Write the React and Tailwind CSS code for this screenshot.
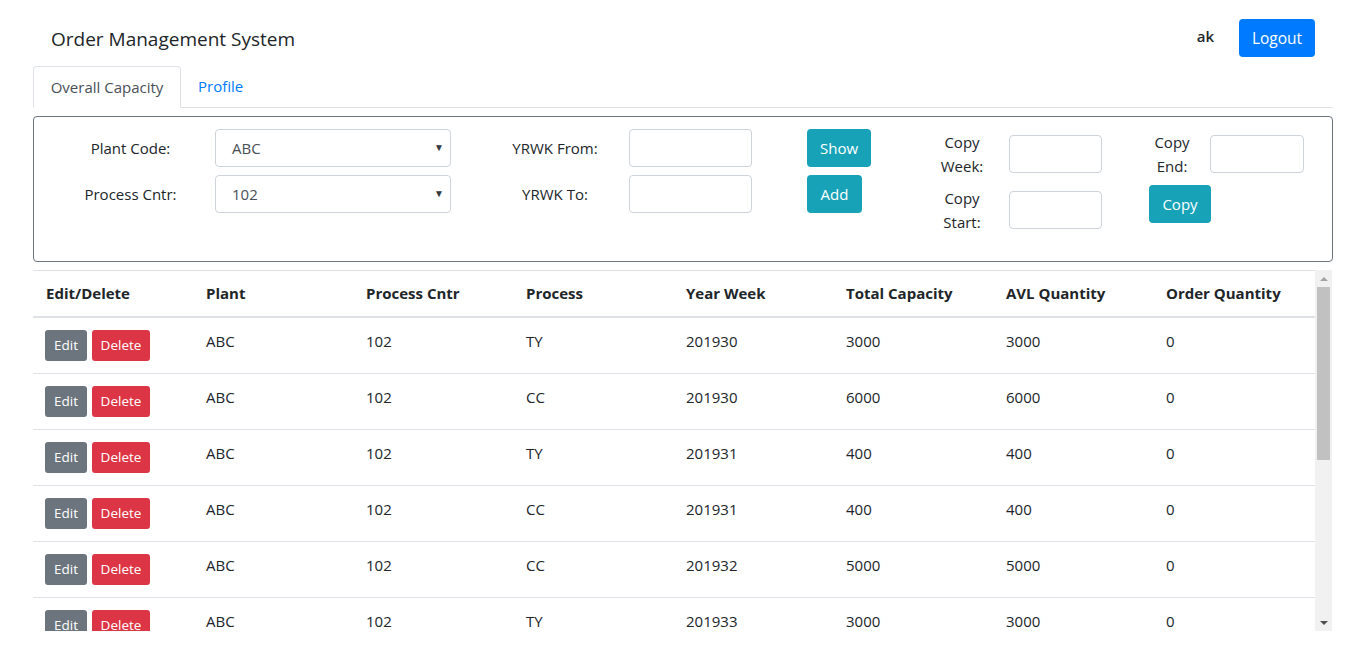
import React from "react";

const rows = [
  ["ABC", "102", "TY", "201930", "3000", "3000", "0"],
  ["ABC", "102", "CC", "201930", "6000", "6000", "0"],
  ["ABC", "102", "TY", "201931", "400", "400", "0"],
  ["ABC", "102", "CC", "201931", "400", "400", "0"],
  ["ABC", "102", "CC", "201932", "5000", "5000", "0"],
  ["ABC", "102", "TY", "201933", "3000", "3000", "0"],
  ["ABC", "102", "CC", "201933", "2000", "2000", "0"],
  ["ABC", "102", "TY", "201934", "3000", "3000", "0"],
];

const headers = ["Edit/Delete", "Plant", "Process Cntr", "Process", "Year Week", "Total Capacity", "AVL Quantity", "Order Quantity"];

function Select({ value }) {
  return (
    <div className="relative w-[236px] h-[38px] border border-[#ced4da] rounded-[4px] bg-white flex items-center pl-[16px] text-[15px] text-[#495057]">
      {value}
      <span className="absolute right-[6px] top-[10px] text-[10px] text-[#343a40]">▼</span>
    </div>
  );
}

function Input({ w, h = "h-[38px]" }) {
  return <div className={`${w} ${h} border border-[#ced4da] rounded-[4px] bg-white`} />;
}

function InfoBtn({ children, w }) {
  return (
    <div className={`${w} h-[38px] bg-[#17a2b8] rounded-[4px] text-white text-[15px] flex items-center justify-center`}>
      {children}
    </div>
  );
}

export default function App() {
  return (
    <div className="font-['Open_Sans',sans-serif] text-[#212529] bg-white w-[1366px] h-[657px] overflow-hidden">
      <div className="mx-[33px] w-[1300px]">
        {/* Header */}
        <div className="flex items-center h-[58px] pt-[19px] pb-[1px] pl-[18px] pr-[18px]">
          <div className="text-[19px] leading-[24px] mt-[2px]">Order Management System</div>
          <div className="ml-auto flex items-center">
            <span className="font-semibold text-[15px] mr-[25px] -mt-[3px]">ak</span>
            <div className="w-[76px] h-[38px] pt-[2px] bg-[#007bff] rounded-[4px] text-white text-[15.5px] flex items-center justify-center">Logout</div>
          </div>
        </div>
        {/* Tabs */}
        <div className="flex mt-[8px] border-b border-[#dee2e6] h-[42px]">
          <div className="w-[148px] h-[42px] border border-[#dee2e6] border-b-white rounded-t-[4px] bg-white flex items-center justify-center text-[15px] text-[#495057]">
            Overall Capacity
          </div>
          <div className="px-[17px] h-[41px] flex items-center text-[15px] text-[#007bff]">Profile</div>
        </div>
        {/* Filter box */}
        <div className="mt-[8px] h-[146px] border border-[#6c757d] rounded-[4px] flex">
          <div className="flex flex-col gap-[8px] pt-[12px]">
            <div className="flex items-center">
              <div className="ml-[12px] w-[169px] text-center text-[15px]">Plant Code:</div>
              <Select value="ABC" />
              <div className="ml-[30px] w-[148px] text-center text-[15px]">YRWK From:</div>
              <Input w="w-[123px]" />
              <div className="ml-[55px]"><InfoBtn w="w-[64px]">Show</InfoBtn></div>
            </div>
            <div className="flex items-center">
              <div className="ml-[12px] w-[169px] text-center text-[15px]">Process Cntr:</div>
              <Select value="102" />
              <div className="ml-[30px] w-[148px] text-center text-[15px]">YRWK To:</div>
              <Input w="w-[123px]" />
              <div className="ml-[55px]"><InfoBtn w="w-[55px]">Add</InfoBtn></div>
            </div>
          </div>
          <div className="ml-[59px] flex flex-col gap-[8px] pt-[13px]">
            <div className="flex items-center">
              <div className="w-[64px] flex flex-col items-center text-[15px] leading-[24px]">
                <span>Copy</span><span>Week:</span>
              </div>
              <div className="ml-[15px] -mt-[1px]"><Input w="w-[93px]" /></div>
              <div className="ml-[47px] w-[46px] flex flex-col items-center text-[15px] leading-[24px]">
                <span>Copy</span><span>End:</span>
              </div>
              <div className="ml-[15px] -mt-[1px]"><Input w="w-[94px]" /></div>
            </div>
            <div className="flex items-center">
              <div className="w-[64px] flex flex-col items-center text-[15px] leading-[24px]">
                <span>Copy</span><span>Start:</span>
              </div>
              <div className="ml-[15px] -mt-[1px]"><Input w="w-[93px]" /></div>
              <div className="ml-[47px] self-start -mt-[1px]"><InfoBtn w="w-[62px]">Copy</InfoBtn></div>
            </div>
          </div>
        </div>
        {/* Table */}
        <div className="mt-[8px] flex h-[361px]">
          <div className="w-[1282px] overflow-hidden border-t border-[#dee2e6]">
            <div className="flex h-[47px] border-b-2 border-[#dee2e6]">
              {headers.map((h) => (
                <div key={h} className="w-[160px] pl-[13px] pt-[10px] font-bold text-[15px] leading-[24px]">{h}</div>
              ))}
            </div>
            {rows.map((r, i) => (
              <div key={i} className="flex h-[56px] border-b border-[#dee2e6]">
                <div className="w-[160px] pl-[12px] pt-[12px] flex gap-[5px] items-start">
                  <div className="w-[42px] h-[31px] bg-[#6c757d] rounded-[3px] text-white text-[13.5px] flex items-center justify-center">Edit</div>
                  <div className="w-[58px] h-[31px] bg-[#dc3545] rounded-[3px] text-white text-[13.5px] flex items-center justify-center">Delete</div>
                </div>
                {r.map((c, j) => (
                  <div key={j} className="w-[160px] pl-[13px] pt-[11px] text-[15px] leading-[24px]">{c}</div>
                ))}
              </div>
            ))}
          </div>
          <div className="w-[17px] bg-[#f1f1f1] flex flex-col items-center">
            <div className="h-[17px] flex items-center justify-center">
              <div className="w-0 h-0 border-l-[4px] border-r-[4px] border-b-[4px] border-l-transparent border-r-transparent border-b-[#a3a3a3]" />
            </div>
            <div className="w-[13px] h-[173px] bg-[#c1c1c1]" />
            <div className="flex-1" />
            <div className="h-[17px] flex items-center justify-center">
              <div className="w-0 h-0 border-l-[4px] border-r-[4px] border-t-[4px] border-l-transparent border-r-transparent border-t-[#505050]" />
            </div>
          </div>
        </div>
      </div>
    </div>
  );
}
